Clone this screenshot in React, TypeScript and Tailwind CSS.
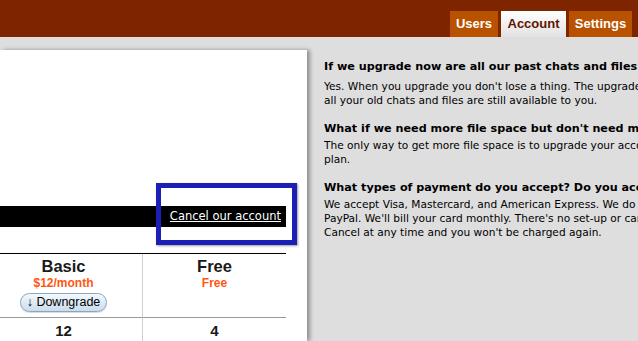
import React from "react";

const verdana = { fontFamily: '"DejaVu Sans", Verdana, sans-serif' };
const helv = { fontFamily: '"Liberation Sans", Arial, Helvetica, sans-serif' };

export default function App() {
  return (
    <div className="w-[638px] h-[341px] overflow-hidden bg-[#dedede] relative" style={helv}>
      <div className="h-[37px] bg-[#7e2500] flex justify-end items-end pr-[6px] gap-[3px]">
        <div className="w-[48px] h-[26px] bg-[#b95200] text-white font-bold text-[13px] flex items-center justify-center pb-[1px]">Users</div>
        <div className="w-[65px] h-[26px] bg-gradient-to-b from-white to-[#e2e2e2] text-[#5e1500] font-bold text-[13px] flex items-center justify-center pb-[1px]">Account</div>
        <div className="w-[63px] h-[26px] bg-[#b95200] text-white font-bold text-[13px] flex items-center justify-center pb-[1px]">Settings</div>
      </div>
      <div className="flex pt-[13px] h-[304px]">
        <div className="w-[307px] shrink-0 bg-white relative shadow-[3px_0_4px_rgba(0,0,0,0.35)] pr-[21px] overflow-hidden">
          <div className="h-[156px]" />
          <div className="h-[21px] bg-black flex items-center justify-end pr-[5px]">
            <span className="text-white text-[11.5px] underline" style={verdana}>Cancel our account</span>
          </div>
          <div className="absolute left-[156px] top-[133px] w-[141px] h-[62px] border-[5px] border-[#1a20b4] shadow-[1px_1px_2px_rgba(0,0,0,0.4)]" />
          <div className="h-[26px]" />
          <div className="border-t border-black grid grid-cols-[158px_143px] -ml-[15px]">
            <div className="flex flex-col items-center pt-[2px] h-[63px] border-r border-[#cfcfcf]">
              <div className="text-[16.5px] font-bold text-[#1a1a1a] leading-[20px]">Basic</div>
              <div className="text-[12px] font-bold text-[#ff5512] leading-[14px]">$12/month</div>
              <div className="mt-[3px] h-[19px] w-[87px] justify-center rounded-full border border-[#8aa6c0] bg-gradient-to-b from-[#f4f9fd] to-[#c9dcee] text-[12.5px] text-black flex items-center leading-none shadow-[0_1px_1px_rgba(0,0,0,0.15)]">↓ Downgrade</div>
            </div>
            <div className="flex flex-col items-center pt-[2px] h-[63px]">
              <div className="text-[16.5px] font-bold text-[#1a1a1a] leading-[20px]">Free</div>
              <div className="text-[12px] font-bold text-[#ff5512] leading-[14px]">Free</div>
            </div>
            <div className="border-t border-[#999] border-r border-r-[#cfcfcf] flex justify-center pt-[5px] h-[24px]">
              <span className="text-[15px] font-bold text-[#1a1a1a] leading-[16px]">12</span>
            </div>
            <div className="border-t border-[#999] flex justify-center pt-[5px] h-[24px]">
              <span className="text-[15px] font-bold text-[#1a1a1a] leading-[16px]">4</span>
            </div>
          </div>
        </div>
        <div className="ml-[17px] pt-[10px] w-[314px] shrink-0 overflow-hidden text-[10.6px] leading-[14px] text-black whitespace-nowrap" style={verdana}>
          <div className="font-bold text-[11.2px] mb-[5px]">If we upgrade now are all our past chats and files saved?</div>
          <div>Yes. When you upgrade you don't lose a thing. The upgrade is instant and</div>
          <div>all your old chats and files are still available to you.</div>
          <div className="font-bold text-[11.2px] mt-[15px] mb-[2px]">What if we need more file space but don't need more users?</div>
          <div>The only way to get more file space is to upgrade your account to a larger</div>
          <div>plan.</div>
          <div className="font-bold text-[11.2px] mt-[15px] mb-[2px]">What types of payment do you accept? Do you accept PayPal?</div>
          <div>We accept Visa, Mastercard, and American Express. We do not accept</div>
          <div>PayPal. We'll bill your card monthly. There's no set-up or cancellation fee.</div>
          <div>Cancel at any time and you won't be charged again.</div>
        </div>
      </div>
    </div>
  );
}
